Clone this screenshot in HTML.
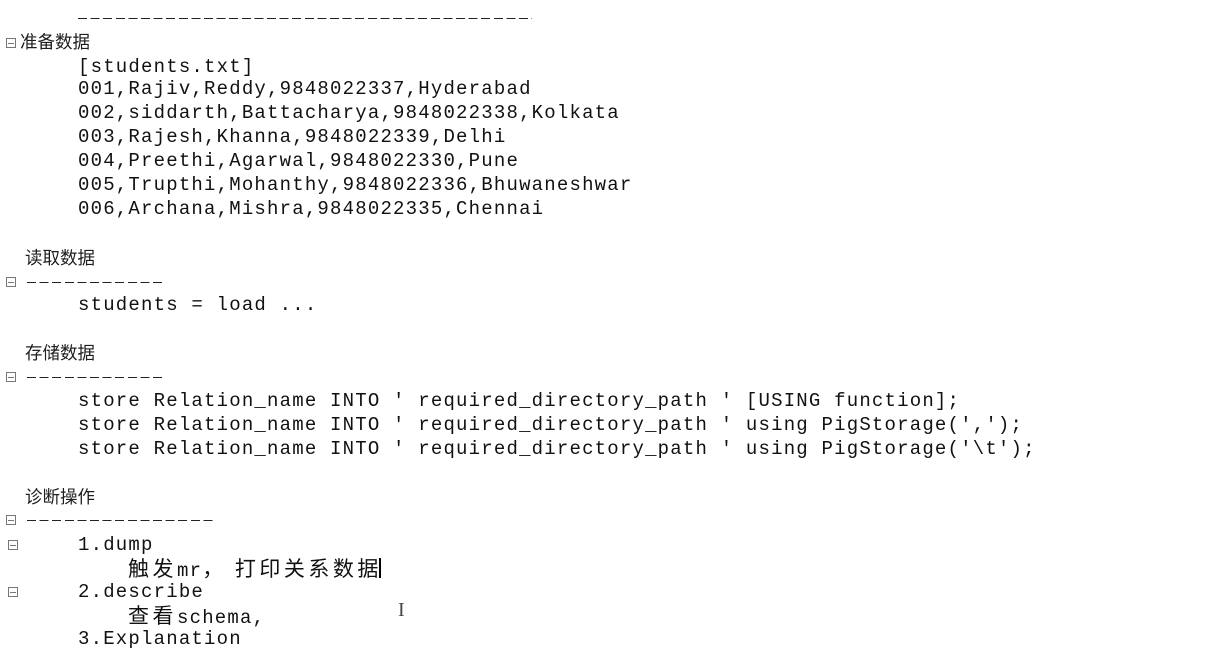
<!DOCTYPE html>
<html><head><meta charset="utf-8"><style>
html,body{margin:0;padding:0;background:#fff;width:1223px;height:649px;overflow:hidden;position:relative}
.l{position:absolute;white-space:pre;font-family:"Liberation Mono","Noto Sans CJK SC",monospace;font-size:19px;letter-spacing:1.2px;color:#111;line-height:24px;height:24px}
.h{position:absolute;white-space:pre;font-family:"Liberation Sans","Noto Sans CJK SC",sans-serif;font-size:17.5px;color:#1e1e1e;line-height:24px}
.c{font-family:"Noto Sans CJK SC",sans-serif;letter-spacing:3.5px;font-size:21px}
.b{position:absolute;width:10px;height:10px;border:1px solid #777;box-sizing:border-box}
.b:after{content:"";position:absolute;left:1px;right:1px;top:4px;height:1px;background:#777}
.d{position:absolute;height:1px;background:repeating-linear-gradient(90deg,#222 0 9px,transparent 9px 12.6px)}
.cur{position:absolute;width:2px;height:20px;background:#000}
</style></head><body>
<div class="d" style="left:78px;top:18px;width:454px"></div>
<div class="b" style="left:6px;top:38px"></div>
<div class="h" style="left:20px;top:30px">准备数据</div>
<div class="l" style="left:78px;top:55px">[students.txt]</div>
<div class="l" style="left:78px;top:77px">001,Rajiv,Reddy,9848022337,Hyderabad</div>
<div class="l" style="left:78px;top:101px">002,siddarth,Battacharya,9848022338,Kolkata</div>
<div class="l" style="left:78px;top:125px">003,Rajesh,Khanna,9848022339,Delhi</div>
<div class="l" style="left:78px;top:149px">004,Preethi,Agarwal,9848022330,Pune</div>
<div class="l" style="left:78px;top:173px">005,Trupthi,Mohanthy,9848022336,Bhuwaneshwar</div>
<div class="l" style="left:78px;top:197px">006,Archana,Mishra,9848022335,Chennai</div>

<div class="h" style="left:25px;top:246px">读取数据</div>
<div class="b" style="left:6px;top:277px"></div>
<div class="d" style="left:27px;top:282px;width:135px"></div>
<div class="l" style="left:78px;top:293px">students = load ...</div>

<div class="h" style="left:25px;top:341px">存储数据</div>
<div class="b" style="left:6px;top:372px"></div>
<div class="d" style="left:27px;top:377px;width:135px"></div>
<div class="l" style="left:78px;top:389px">store Relation_name INTO ' required_directory_path ' [USING function];</div>
<div class="l" style="left:78px;top:413px">store Relation_name INTO ' required_directory_path ' using PigStorage(',');</div>
<div class="l" style="left:78px;top:437px">store Relation_name INTO ' required_directory_path ' using PigStorage('\t');</div>

<div class="h" style="left:25px;top:485px">诊断操作</div>
<div class="b" style="left:6px;top:515px"></div>
<div class="d" style="left:27px;top:520px;width:186px"></div>
<div class="b" style="left:8px;top:540px"></div>
<div class="l" style="left:78px;top:533px">1.dump</div>
<div class="l" style="left:128px;top:556px"><span class="c">触发</span>mr<span class="c">， 打印关系数据</span></div>
<div class="cur" style="left:379px;top:558px"></div>
<div class="b" style="left:8px;top:587px"></div>
<div class="l" style="left:78px;top:580px">2.describe</div>
<div class="l" style="left:128px;top:603px"><span class="c">查看</span>schema,</div>
<div class="h" style="left:398px;top:598px;font-size:20px;color:#444;font-family:'Liberation Serif',serif">I</div>
<div class="l" style="left:78px;top:627px">3.Explanation</div>
</body></html>
